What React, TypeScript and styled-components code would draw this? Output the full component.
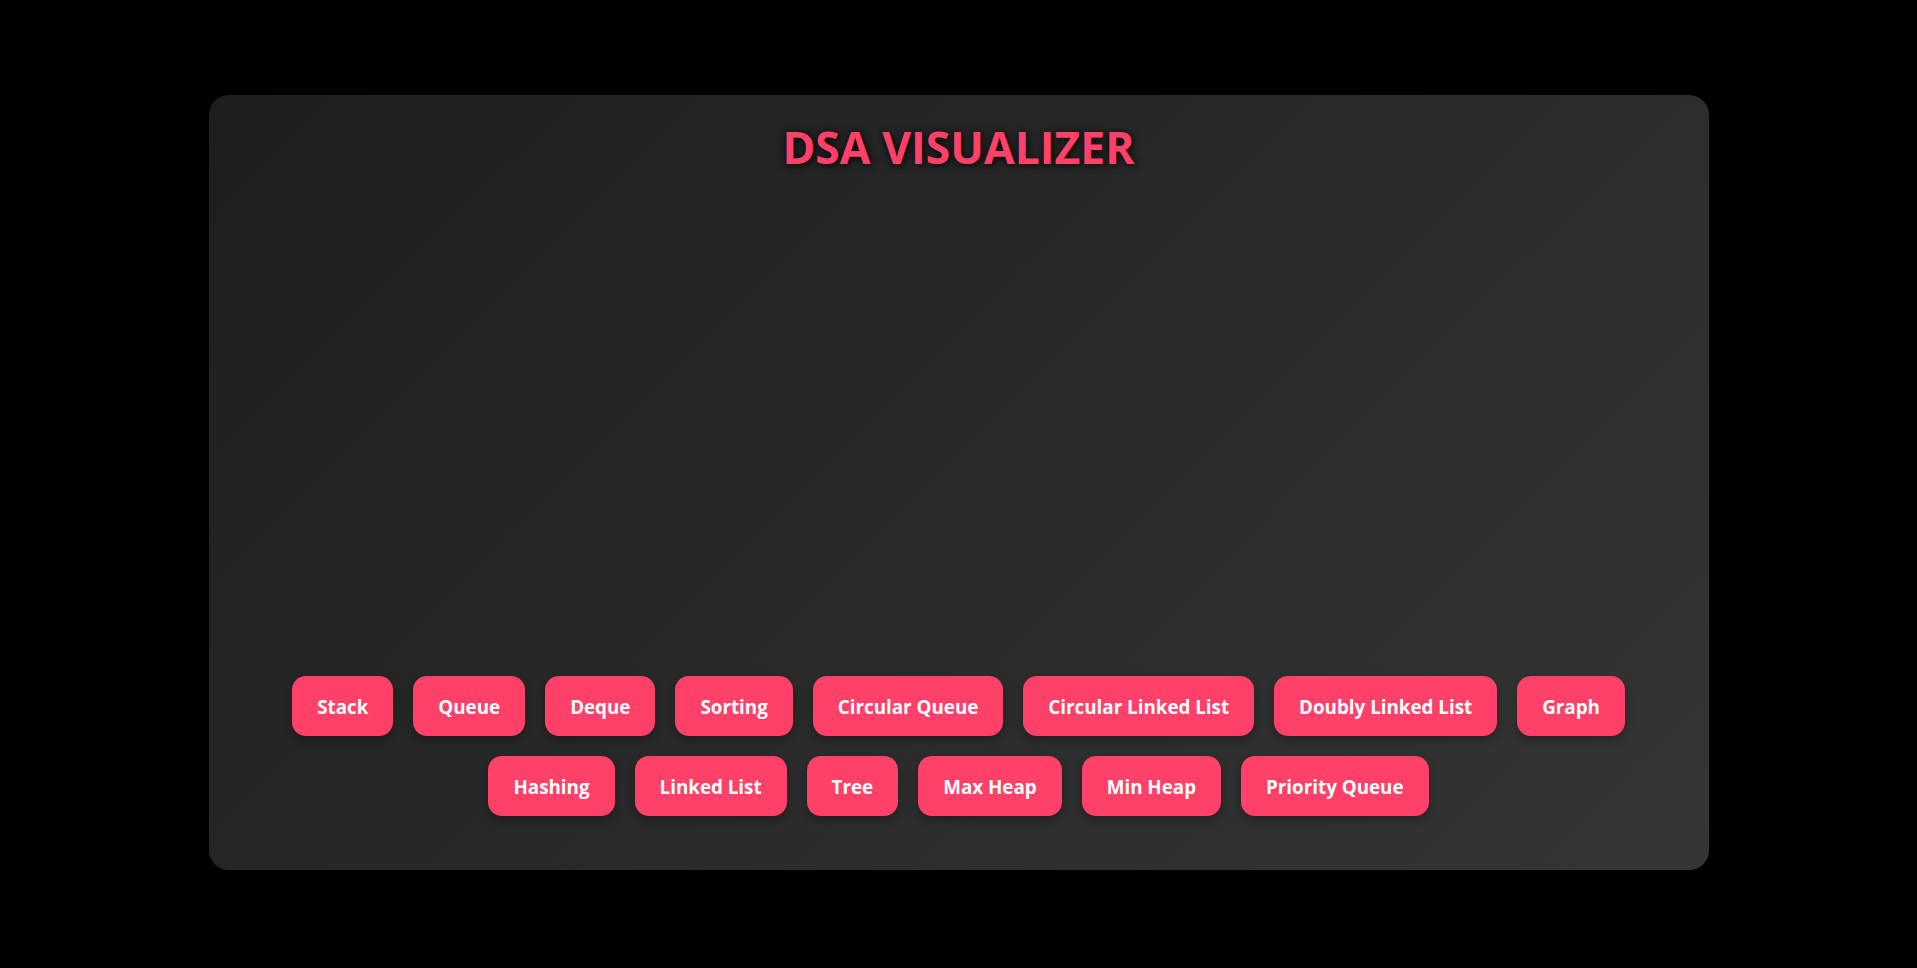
import React from "react";
import styled, { createGlobalStyle } from "styled-components";

const Global = createGlobalStyle`
  html, body {
    margin: 0;
    padding: 0;
    background: #000;
    font-family: "Open Sans", "Noto Sans", sans-serif;
  }
`;

const Page = styled.div`
  display: flex;
  justify-content: center;
  padding-top: 95px;
  min-height: 968px;
  box-sizing: border-box;
`;

const Card = styled.main`
  width: 1500px;
  height: 775px;
  box-sizing: border-box;
  border-radius: 20px;
  background: linear-gradient(135deg, #1e1e1e 0%, #353535 100%);
  box-shadow: 0 10px 30px rgba(0, 0, 0, 0.5);
  display: flex;
  flex-direction: column;
  align-items: center;
  padding: 21px 40px 54px;
`;

const Title = styled.h1`
  margin: 0;
  font-size: 44.5px;
  font-weight: 700;
  color: #ff4069;
  letter-spacing: 0;
  text-shadow: 0 0 10px rgba(0, 0, 0, 0.6), 2px 2px 6px rgba(0, 0, 0, 0.5);
`;

const Stage = styled.section`
  flex: 1;
  width: 100%;
`;

const Controls = styled.nav`
  display: flex;
  flex-wrap: wrap;
  justify-content: center;
  gap: 20px;
  max-width: 1400px;
`;

const Button = styled.button`
  border: none;
  border-radius: 14px;
  background: #ff4069;
  color: #fff;
  font-family: "Open Sans", "Noto Sans", sans-serif;
  font-weight: 700;
  font-size: 18.8px;
  height: 60px;
  padding: 1px 25px 0;
  cursor: pointer;
  box-shadow: 0 4px 10px rgba(0, 0, 0, 0.3);
`;

const items = [
  "Stack",
  "Queue",
  "Deque",
  "Sorting",
  "Circular Queue",
  "Circular Linked List",
  "Doubly Linked List",
  "Graph",
  "Hashing",
  "Linked List",
  "Tree",
  "Max Heap",
  "Min Heap",
  "Priority Queue",
];

export default function App() {
  return (
    <>
      <Global />
      <Page>
        <Card>
          <Title>DSA VISUALIZER</Title>
          <Stage />
          <Controls>
            {items.map((t) => (
              <Button key={t}>{t}</Button>
            ))}
          </Controls>
        </Card>
      </Page>
    </>
  );
}
